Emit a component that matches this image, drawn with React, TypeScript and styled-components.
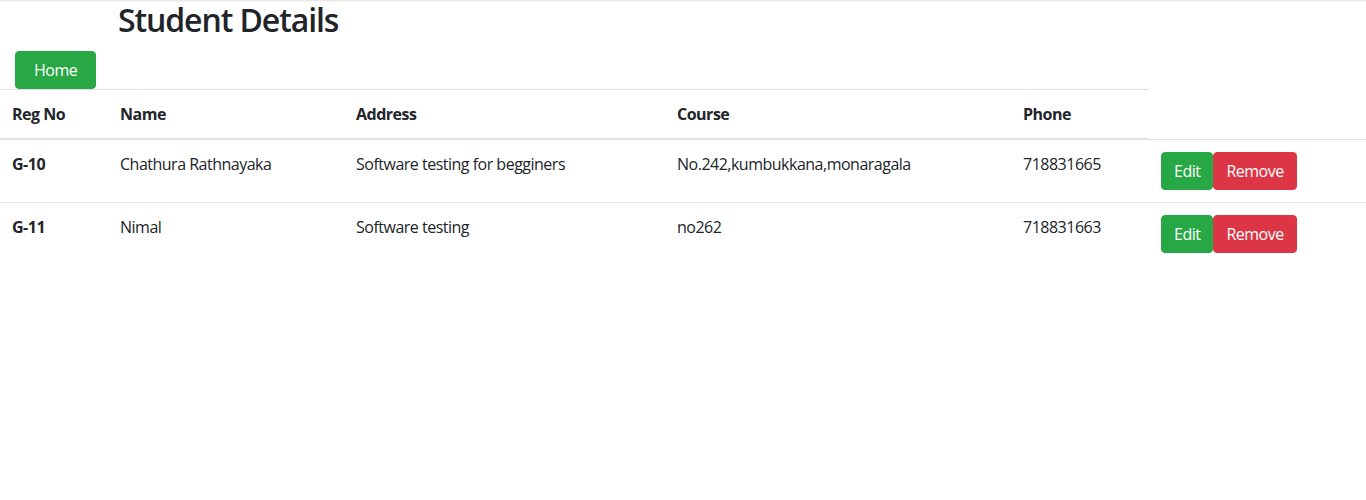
import React from "react";
import styled, { createGlobalStyle } from "styled-components";

const Global = createGlobalStyle`
  html, body { margin: 0; padding: 0; background: #fff; }
  body {
    font-family: "Open Sans", "Noto Sans", "Liberation Sans", sans-serif;
    font-size: 16px;
    line-height: 1.5;
    letter-spacing: -0.5px;
    color: #212529;
  }
  * { box-sizing: border-box; }
`;

const Page = styled.div`
  min-height: 500px;
  padding-top: 1px;
  background: linear-gradient(#e2e2e2, #f0f0f0 1px, #fff 2.5px);
`;

const Title = styled.h2`
  margin: 0 0 12px 118px;
  font-size: 32px;
  font-weight: 600;
  letter-spacing: -1.1px;
  line-height: 1.2;
`;

const Toolbar = styled.div`
  padding-left: 15px;
  height: 38px;
`;

const Button = styled.button<{ $variant: "success" | "danger"; $wide?: boolean }>`
  display: inline-block;
  font-family: inherit;
  font-size: 16px;
  line-height: 1.5;
  letter-spacing: -0.5px;
  font-weight: 400;
  color: #fff;
  border: 1px solid ${(p) => (p.$variant === "success" ? "#28a745" : "#dc3545")};
  background: ${(p) => (p.$variant === "success" ? "#28a745" : "#dc3545")};
  border-radius: 4px;
  padding: 6px ${(p) => (p.$wide ? "18px" : "12px")};
  cursor: pointer;
  vertical-align: middle;
`;

const Table = styled.table`
  width: 100%;
  border-collapse: collapse;
  table-layout: fixed;
`;

const Th = styled.th`
  text-align: left;
  font-weight: 700;
  padding: 12px;
  border-top: 1px solid #dee2e6;
  border-bottom: 2px solid #dee2e6;
  vertical-align: bottom;
`;

const Td = styled.td<{ $bold?: boolean }>`
  padding: 12px;
  border-top: 1px solid #dee2e6;
  vertical-align: top;
  font-weight: ${(p) => (p.$bold ? 700 : 400)};
  white-space: nowrap;
`;

const Actions = styled.div`
  display: flex;
`;

const rows = [
  {
    reg: "G-10",
    name: "Chathura Rathnayaka",
    address: "Software testing for begginers",
    course: "No.242,kumbukkana,monaragala",
    phone: "718831665",
  },
  {
    reg: "G-11",
    name: "Nimal",
    address: "Software testing",
    course: "no262",
    phone: "718831663",
  },
];

export default function App() {
  return (
    <Page>
      <Global />
      <Title>Student Details</Title>
      <Toolbar>
        <Button $variant="success" $wide>Home</Button>
      </Toolbar>
      <Table>
        <colgroup>
          <col style={{ width: 108 }} />
          <col style={{ width: 236 }} />
          <col style={{ width: 321 }} />
          <col style={{ width: 346 }} />
          <col style={{ width: 138 }} />
          <col />
        </colgroup>
        <thead>
          <tr>
            <Th>Reg No</Th>
            <Th>Name</Th>
            <Th>Address</Th>
            <Th>Course</Th>
            <Th>Phone</Th>
          </tr>
        </thead>
        <tbody>
          {rows.map((r) => (
            <tr key={r.reg}>
              <Td $bold>{r.reg}</Td>
              <Td>{r.name}</Td>
              <Td>{r.address}</Td>
              <Td>{r.course}</Td>
              <Td>{r.phone}</Td>
              <Td>
                <Actions>
                  <Button $variant="success">Edit</Button>
                  <Button $variant="danger">Remove</Button>
                </Actions>
              </Td>
            </tr>
          ))}
        </tbody>
      </Table>
    </Page>
  );
}
